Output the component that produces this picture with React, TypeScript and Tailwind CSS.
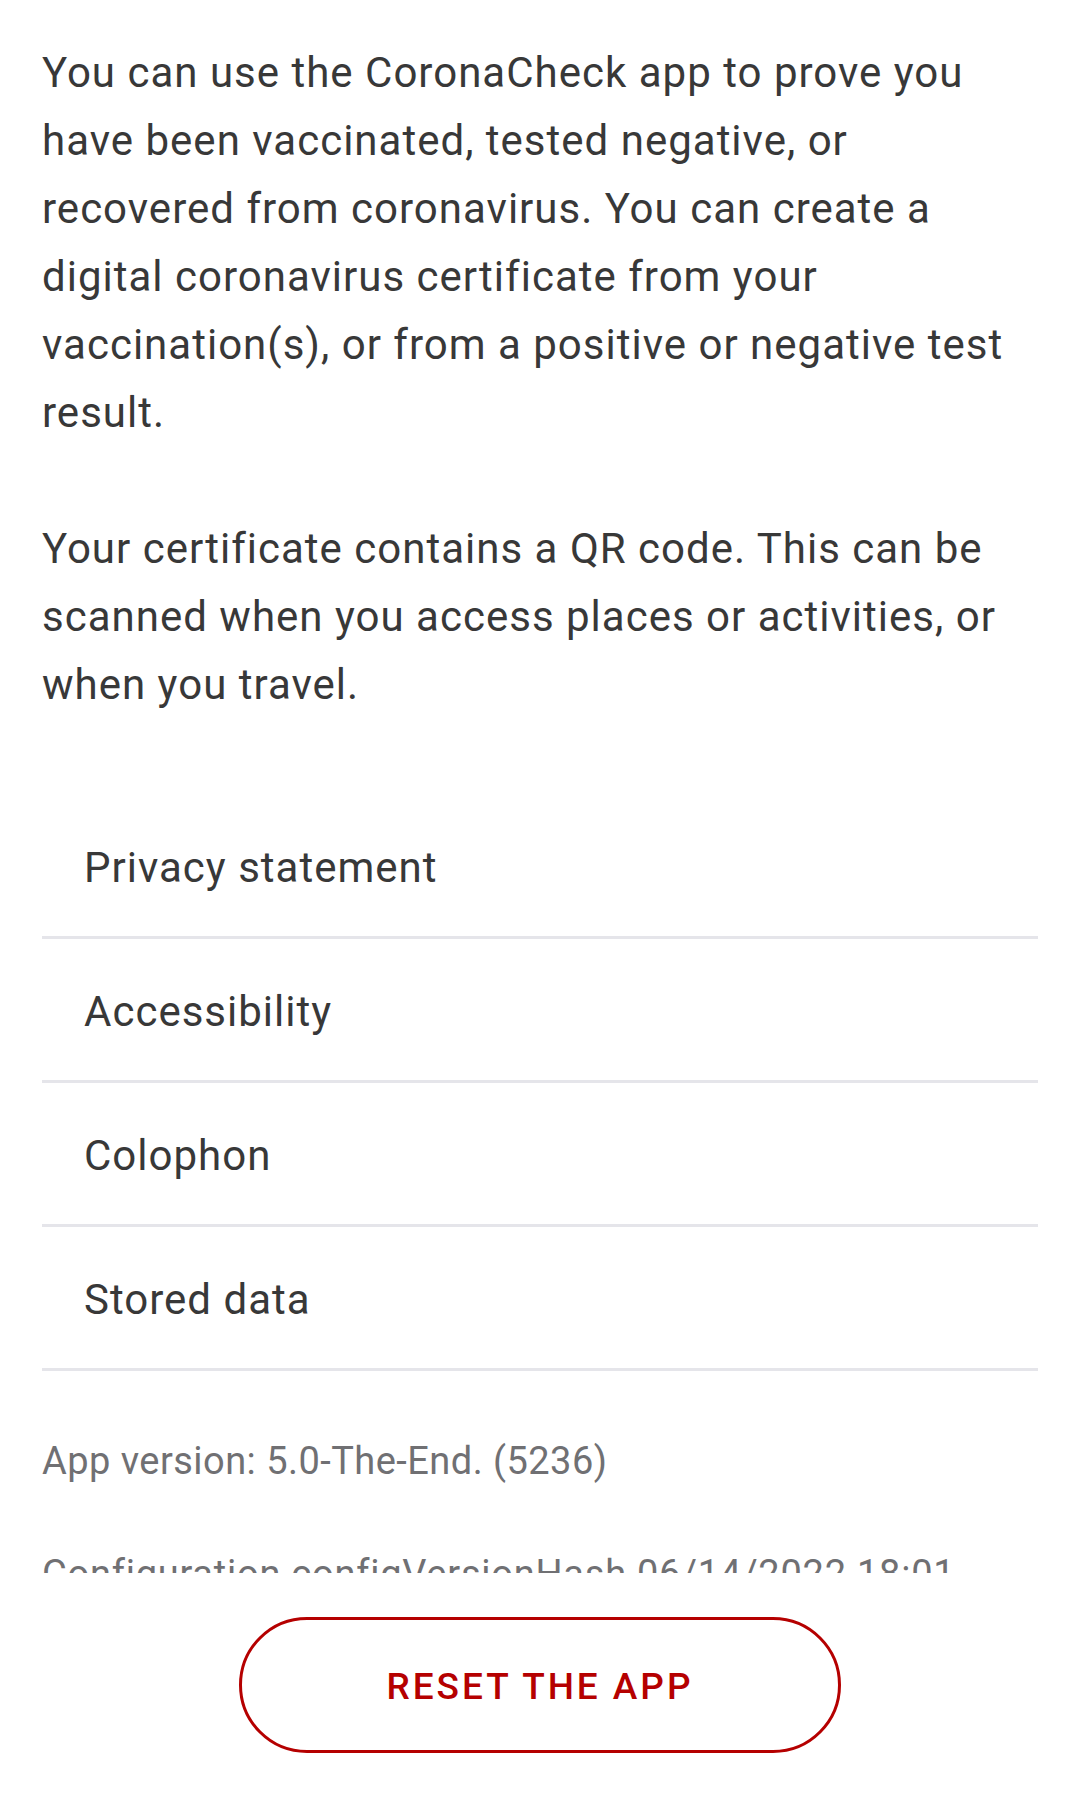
import React from "react";

const rows = ["Privacy statement", "Accessibility", "Colophon", "Stored data"];

export default function App() {
  return (
    <div
      className="w-[1080px] h-[1794px] bg-white flex flex-col overflow-hidden"
      style={{ fontFamily: "Roboto, 'Noto Sans', sans-serif" }}
    >
      <div className="h-[1573px] overflow-hidden shrink-0">
        <div className="pt-[39px] px-[42px]">
          <p className="text-[42px] leading-[68px] text-[#383838] tracking-[0.024em]">
            You can use the CoronaCheck app to prove you have been vaccinated, tested negative, or recovered from coronavirus. You can create a digital coronavirus certificate from your vaccination(s), or from a positive or negative test result.
          </p>
          <p className="mt-[68px] text-[42px] leading-[68px] text-[#383838] tracking-[0.024em]">
            Your certificate contains a QR code. This can be scanned when you access places or activities, or when you travel.
          </p>
          <div className="mt-[76px] flex flex-col">
            {rows.map((r) => (
              <div
                key={r}
                className="pl-[42px] pt-[48px] pb-[44px] border-b-[3px] border-[#e5e5ea] text-[42px] leading-[49px] text-[#383838] tracking-[0.024em]"
              >
                {r}
              </div>
            ))}
          </div>
          <div className="mt-[68px] text-[38px] leading-[44px] text-[#707073] tracking-[0.012em] whitespace-nowrap">
            App version: 5.0-The-End. (5236)
          </div>
          <div className="mt-[69px] text-[38px] leading-[44px] text-[#707073] tracking-[0.02em] whitespace-nowrap">
            Configuration configVersionHash 06/14/2022 18:01
          </div>
        </div>
      </div>
      <div className="flex justify-center pt-[44px]">
        <button className="w-[602px] h-[136px] rounded-full border-[3px] border-[#b50000] bg-white flex items-center justify-center">
          <span className="mt-[4px] text-[37px] font-medium tracking-[0.08em] text-[#b50000] leading-[44px]">
            RESET THE APP
          </span>
        </button>
      </div>
    </div>
  );
}
